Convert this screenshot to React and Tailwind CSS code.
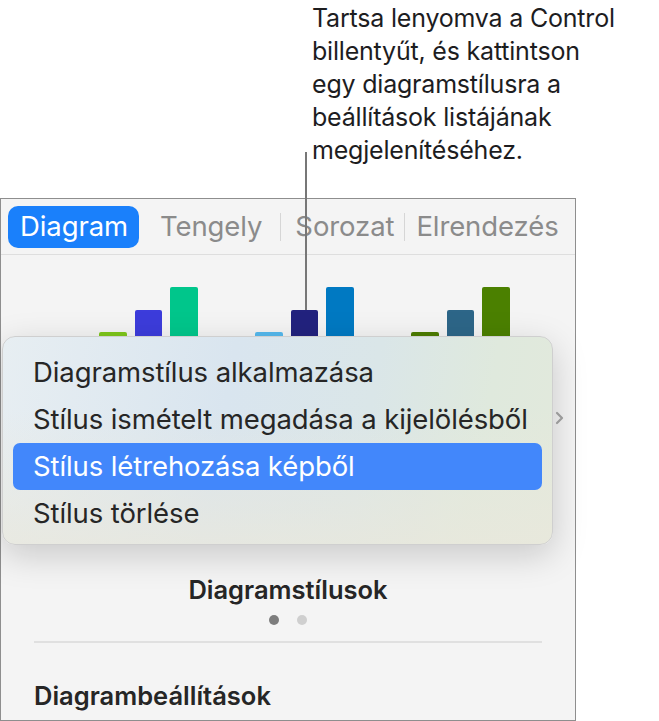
import React from "react";

const groups = [
  ["#7dc61b", "#3c3cdb", "#00c68b"],
  ["#55b9ee", "#22227e", "#0079c2"],
  ["#4c7c02", "#2d6688", "#4b8000"],
];

function Bars({ colors }) {
  return (
    <div className="flex items-end gap-[8px] h-[120px] w-[99px]">
      <div className="w-[28px] h-[75px] rounded-t-[2px]" style={{ background: colors[0] }} />
      <div className="w-[28px] h-[97px] rounded-t-[2px]" style={{ background: colors[1] }} />
      <div className="w-[28px] h-[120px] rounded-t-[2px]" style={{ background: colors[2] }} />
    </div>
  );
}

export default function App() {
  return (
    <div className="relative w-[659px] h-[721px] bg-white overflow-hidden font-['Inter',sans-serif] antialiased">
      <div className="h-[198px] pl-[312px] pt-[2px] text-[25px] leading-[33px] text-[#1d1d1f] tracking-[-0.2px]">
        Tartsa lenyomva a Control
        <br />
        billentyűt, és kattintson
        <br />
        egy diagramstílusra a
        <br />
        beállítások listájának
        <br />
        megjelenítéséhez.
      </div>

      <div className="w-[576px] h-[523px] border border-[#8e8e8e] bg-[#f4f4f4] flex flex-col">
        <div className="h-[56px] shrink-0 border-b border-[#dedede] flex items-center pl-[7px] text-[27.5px] tracking-[-0.1px]">
          <div className="h-[42px] pl-[12px] pr-[11px] rounded-[10px] bg-[#1a80fb] text-white flex items-center">Diagram</div>
          <div className="ml-[21px] text-[#8b8b8b]">Tengely</div>
          <div className="ml-[18px] w-px h-[28px] bg-[#d6d6d6]" />
          <div className="ml-[14px] text-[#8b8b8b]">Sorozat</div>
          <div className="ml-[10px] w-px h-[28px] bg-[#d6d6d6]" />
          <div className="ml-[11px] text-[#8b8b8b]">Elrendezés</div>
        </div>

        <div className="mt-[32px] pl-[98px] flex gap-[57px]">
          {groups.map((g, i) => (
            <Bars key={i} colors={g} />
          ))}
        </div>

        <div className="mt-[169px] text-center text-[25.5px] leading-[28px] font-semibold text-[#262626]">Diagramstílusok</div>
        <div className="mt-[11px] flex justify-center gap-[18px]">
          <div className="w-[10px] h-[10px] rounded-full bg-[#7d7d7d]" />
          <div className="w-[10px] h-[10px] rounded-full bg-[#cfcfcf]" />
        </div>
        <div className="mt-[16px] mx-[33px] h-[2px] bg-[#e0e0e0]" />
        <div className="mt-[39px] pl-[33px] text-[25.5px] leading-[28px] font-semibold text-[#262626]">Diagrambeállítások</div>
      </div>

      <div className="absolute left-[305px] top-[152px] w-[1.5px] h-[158px] bg-[#777777]" />

      <div className="absolute left-[2px] top-[336px] w-[551px] h-[209px] rounded-[13px] border border-[#cfcfcf] shadow-[0_10px_35px_rgba(0,0,0,0.18)] overflow-hidden bg-[linear-gradient(to_bottom,rgba(236,234,222,0)_35%,rgba(234,232,220,0.75)_100%),linear-gradient(100deg,#e7eef2_0%,#d9e5ef_40%,#dae6e8_65%,#dfe9dd_85%,#e2e9dc_100%)]">
        <div className="pt-[12px] px-[10px] text-[27.5px] text-[#262626] tracking-[-0.1px]">
          <div className="h-[47px] pl-[20px] flex items-center">Diagramstílus alkalmazása</div>
          <div className="h-[47px] pl-[20px] flex items-center">Stílus ismételt megadása a kijelölésből</div>
          <div className="h-[47px] pl-[20px] flex items-center rounded-[7px] bg-[#4287fb] text-white">Stílus létrehozása képből</div>
          <div className="h-[47px] pl-[20px] flex items-center">Stílus törlése</div>
        </div>
      </div>

      <svg className="absolute left-[555px] top-[411px]" width="9" height="14" viewBox="0 0 9 14">
        <path d="M2 2 L7 7 L2 12" fill="none" stroke="#9a9a9a" strokeWidth="2.2" strokeLinecap="round" strokeLinejoin="round" />
      </svg>
    </div>
  );
}
